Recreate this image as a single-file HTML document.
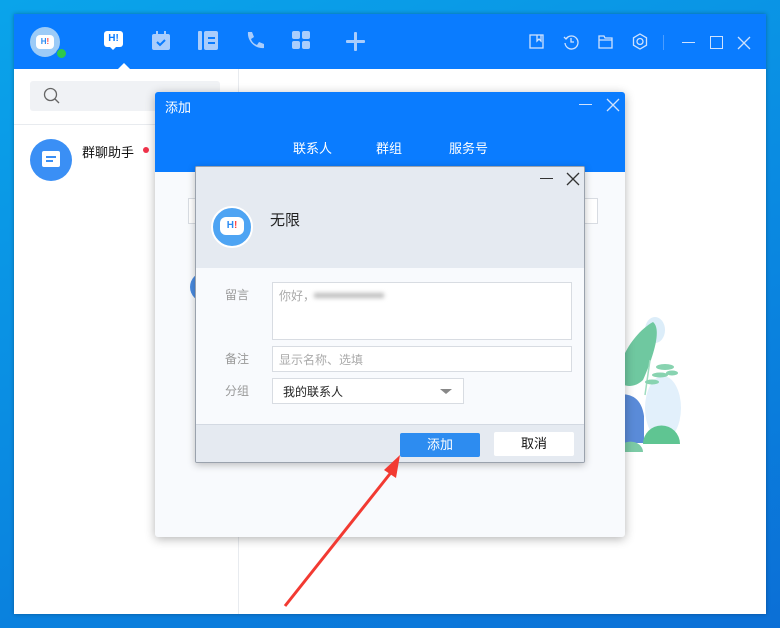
<!DOCTYPE html>
<html><head><meta charset="utf-8"><style>
*{margin:0;padding:0;box-sizing:border-box}
body{width:780px;height:628px;overflow:hidden;position:relative;font-family:"Liberation Sans","Noto Sans CJK SC",sans-serif;background:linear-gradient(160deg,#0aa4ea 0%,#0a86e0 60%,#0b6fd6 100%)}
.abs{position:absolute}
.win{left:14px;top:14px;width:752px;height:600px;background:#fff;box-shadow:0 0 4px rgba(0,0,0,.3)}
.hdr{left:0;top:0;width:752px;height:55px;background:#0a7cff}
</style></head><body>
<div class="abs win">
 <div class="abs hdr"></div>
 <div class="abs" style="left:16px;top:13px;width:30px;height:30px;border-radius:50%;background:#9ccbf7"></div>
 <div class="abs" style="left:22px;top:21px;width:18px;height:14px;border-radius:4px;background:#fff;font-size:8px;font-weight:bold;color:#2a8bf2;text-align:center;line-height:14px">H<span style="color:#f44">!</span></div>
 <div class="abs" style="left:42px;top:34px;width:11px;height:11px;border-radius:50%;background:#2ec84a;border:1.5px solid #0a7cff"></div>
 <div class="abs" style="left:90px;top:17px;width:19px;height:16px;border-radius:3px;background:#fff;font-size:10px;font-weight:bold;color:#0a7cff;text-align:center;line-height:16px">H!</div>
 <div class="abs" style="left:95px;top:32px;border:4px solid transparent;border-top-color:#fff;border-bottom:0"></div>
 <div class="abs" style="left:104px;top:49px;border:6px solid transparent;border-bottom-color:#fff;border-top:0"></div>
 <svg class="abs" style="left:136px;top:16px" width="22" height="22" viewBox="0 0 22 22"><rect x="2" y="4" width="18" height="16" rx="2" fill="#a9cdfc"/><rect x="6" y="1" width="2" height="5" fill="#a9cdfc"/><rect x="14" y="1" width="2" height="5" fill="#a9cdfc"/><path d="M7 12l3 3 5-5" stroke="#0a7cff" stroke-width="2" fill="none"/></svg>
 <svg class="abs" style="left:184px;top:17px" width="20" height="19" viewBox="0 0 20 19"><rect x="0" y="0" width="4" height="19" rx="1" fill="#a9cdfc"/><rect x="6" y="0" width="14" height="19" rx="2" fill="#a9cdfc"/><rect x="10" y="6" width="7" height="2" fill="#0a7cff"/><rect x="10" y="11" width="7" height="2" fill="#0a7cff"/></svg>
 <svg class="abs" style="left:231px;top:17px" width="19" height="19" viewBox="0 0 19 19"><path d="M3 1l4 0 2 5-3 2c1 3 3 5 6 6l2-3 5 2v4c-9 1-17-7-16-16z" fill="#a9cdfc"/></svg>
 <svg class="abs" style="left:278px;top:17px" width="18" height="18"><rect x="0" y="0" width="8" height="8" rx="2" fill="#a9cdfc"/><rect x="10" y="0" width="8" height="8" rx="2" fill="#a9cdfc"/><rect x="0" y="10" width="8" height="8" rx="2" fill="#a9cdfc"/><rect x="10" y="10" width="8" height="8" rx="2" fill="#a9cdfc"/></svg>
 <svg class="abs" style="left:332px;top:18px" width="19" height="19"><rect x="8" y="0" width="3" height="19" rx="1" fill="#a9cdfc"/><rect x="0" y="8" width="19" height="3" rx="1" fill="#a9cdfc"/></svg>
 <svg class="abs" style="left:515px;top:20px" width="16" height="16" fill="none" stroke="#cfe2fd" stroke-width="1.3"><rect x="1" y="1" width="13" height="13"/><path d="M8 1v6l2-2 2 2V1"/></svg>
 <svg class="abs" style="left:549px;top:20px" width="16" height="16" fill="none" stroke="#cfe2fd" stroke-width="1.3"><path d="M3 5A6.5 6.5 0 1 1 2 9"/><path d="M1 3l2 2 2-2"/><path d="M8 4v4h3"/></svg>
 <svg class="abs" style="left:584px;top:21px" width="16" height="14" fill="none" stroke="#cfe2fd" stroke-width="1.3"><path d="M1 1h5l1 2h7v10H1z M1 5h13"/></svg>
 <svg class="abs" style="left:618px;top:19px" width="16" height="17" fill="none" stroke="#cfe2fd" stroke-width="1.3"><path d="M8 1l6.5 3.8v7.4L8 16 1.5 12.2V4.8z"/><circle cx="8" cy="8.5" r="3"/></svg>
 <div class="abs" style="left:649px;top:21px;width:1px;height:15px;background:#4b9dff"></div>
 <div class="abs" style="left:668px;top:28px;width:13px;height:1.3px;background:#cfe2fd"></div>
 <div class="abs" style="left:696px;top:22px;width:13px;height:13px;border:1.3px solid #cfe2fd"></div>
 <svg class="abs" style="left:723px;top:22px" width="14" height="14" stroke="#cfe2fd" stroke-width="1.3"><path d="M1 1l12 12M13 1L1 13"/></svg>
 <div class="abs" style="left:224px;top:55px;width:1px;height:545px;background:#e8ebef"></div>
 <div class="abs" style="left:16px;top:67px;width:190px;height:30px;border-radius:3px;background:#f0f2f5"></div>
 <svg class="abs" style="left:29px;top:73px" width="18" height="18" fill="none" stroke="#666" stroke-width="1.3"><circle cx="7.5" cy="7.5" r="6"/><path d="M12 12l4 4"/></svg>
 <div class="abs" style="left:0;top:110px;width:224px;height:1px;background:#e8ebef"></div>
 <div class="abs" style="left:16px;top:125px;width:42px;height:42px;border-radius:50%;background:#3a8ff5"></div>
 <div class="abs" style="left:28px;top:137px;width:18px;height:16px;border-radius:2px;background:#fff"></div>
 <div class="abs" style="left:32px;top:142px;width:10px;height:1.5px;background:#3a8ff5"></div>
 <div class="abs" style="left:32px;top:146px;width:7px;height:1.5px;background:#3a8ff5"></div>
 <div class="abs" style="left:68px;top:128px;font-size:13px;color:#111">群聊助手</div>
 <div class="abs" style="left:129px;top:133px;width:6px;height:6px;border-radius:50%;background:#f0324a"></div>
 <!-- plant (abs coords minus 14) -->
 <svg class="abs" style="left:596px;top:296px" width="80" height="160" viewBox="610 310 80 160">
  <ellipse cx="655" cy="330" rx="10" ry="13" fill="#dcedf9"/>
  <ellipse cx="663" cy="408" rx="18" ry="32" fill="#e2f0fb"/>
  <path d="M618 380c0-25 20-50 35-58 10 8-2 40-10 58-8 8-20 8-25 0z" fill="#6fc8a0"/>
  <path d="M645 395l5-35" stroke="#9fdcbf" stroke-width="1.5"/>
  <ellipse cx="665" cy="367" rx="9" ry="3" fill="#88d3b0"/><ellipse cx="660" cy="375" rx="8" ry="2.5" fill="#88d3b0"/><ellipse cx="652" cy="382" rx="7" ry="2.5" fill="#88d3b0"/><ellipse cx="672" cy="373" rx="6" ry="2.5" fill="#88d3b0"/>
  <path d="M610 396q30 -8 34 20v27h-34z" fill="#5a8bd8"/>
  <path d="M643 444a18 18 0 0 1 37 0z" fill="#5fc592"/>
  <path d="M618 452a12 10 0 0 1 25 0z" fill="#7ccba6"/>
 </svg>
</div>

<div class="abs" style="left:155px;top:92px;width:470px;height:445px;background:#f8fafd;border-radius:3px;box-shadow:0 2px 10px rgba(0,0,0,.3);overflow:hidden">
 <div class="abs" style="left:0;top:0;width:470px;height:80px;background:#0a7cff"></div>
 <div class="abs" style="left:10px;top:5px;font-size:13px;color:#fff">添加</div>
 <div class="abs" style="left:424px;top:12px;width:13px;height:1.3px;background:#cfe2fd"></div>
 <svg class="abs" style="left:451px;top:6px" width="14" height="14" stroke="#cfe2fd" stroke-width="1.3"><path d="M1 1l12 12M13 1L1 13"/></svg>
 <div class="abs" style="left:138px;top:46px;font-size:13px;color:#fff">联系人</div>
 <div class="abs" style="left:221px;top:46px;font-size:13px;color:#fff">群组</div>
 <div class="abs" style="left:294px;top:46px;font-size:13px;color:#fff">服务号</div>
 <div class="abs" style="left:33px;top:106px;width:410px;height:26px;border:1px solid #d8dce2;background:#fff"></div>
 <div class="abs" style="left:35px;top:180px;width:30px;height:30px;border-radius:50%;background:#4a8be0"></div>
</div>

<div class="abs" style="left:195px;top:166px;width:390px;height:297px;background:#f8fafd;border:1px solid #9aa2ad;border-radius:2px;box-shadow:0 2px 8px rgba(0,0,0,.25);overflow:hidden">
 <div class="abs" style="left:0;top:0;width:390px;height:101px;background:#e5eaf1"></div>
 <div class="abs" style="left:344px;top:11px;width:13px;height:1.3px;background:#333"></div>
 <svg class="abs" style="left:370px;top:5px" width="14" height="14" stroke="#333" stroke-width="1.3"><path d="M1 1l12 12M13 1L1 13"/></svg>
 <div class="abs" style="left:15px;top:39px;width:42px;height:42px;border-radius:50%;background:#4ea4f3;border:2px solid #fff"></div>
 <div class="abs" style="left:24px;top:50px;width:24px;height:18px;border-radius:6px;background:#fff;font-size:10px;font-weight:bold;color:#2a8bf2;text-align:center;line-height:18px">H<span style="color:#f44">!</span></div>
 <div class="abs" style="left:74px;top:42px;font-size:15px;color:#222">无限</div>
 <div class="abs" style="left:29px;top:119px;font-size:12px;color:#999">留言</div>
 <div class="abs" style="left:76px;top:115px;width:300px;height:58px;border:1px solid #d8dce2;background:#fff"></div>
 <div class="abs" style="left:83px;top:120px;font-size:12px;color:#aaa">你好，</div>
 <div class="abs" style="left:118px;top:126px;width:70px;height:5px;background:#bbb;filter:blur(2px)"></div>
 <div class="abs" style="left:29px;top:183px;font-size:12px;color:#999">备注</div>
 <div class="abs" style="left:76px;top:179px;width:300px;height:26px;border:1px solid #d8dce2;background:#fff;font-size:12px;color:#aaa;padding:4px 0 0 6px">显示名称、选填</div>
 <div class="abs" style="left:29px;top:215px;font-size:12px;color:#999">分组</div>
 <div class="abs" style="left:76px;top:211px;width:192px;height:26px;border:1px solid #d8dce2;background:#fff;font-size:12px;color:#222;padding:4px 0 0 10px">我的联系人</div>
 <div class="abs" style="left:244px;top:222px;border:6px solid transparent;border-top:5px solid #888;border-bottom:0"></div>
 <div class="abs" style="left:0;top:257px;width:390px;height:40px;background:#e5eaf1;border-top:1px solid #d3d9e2"></div>
 <div class="abs" style="left:204px;top:266px;width:80px;height:24px;background:#2d8cf0;border-radius:2px;color:#fff;font-size:13px;text-align:center;line-height:24px">添加</div>
 <div class="abs" style="left:298px;top:265px;width:80px;height:24px;background:#fff;border-radius:2px;color:#111;font-size:13px;text-align:center;line-height:24px">取消</div>
</div>

<svg class="abs" style="left:0;top:0" width="780" height="628"><path d="M285 606L393 470" stroke="#f23a32" stroke-width="3"/><path d="M400 455L384 470 396 478z" fill="#f23a32"/></svg>
</body></html>
